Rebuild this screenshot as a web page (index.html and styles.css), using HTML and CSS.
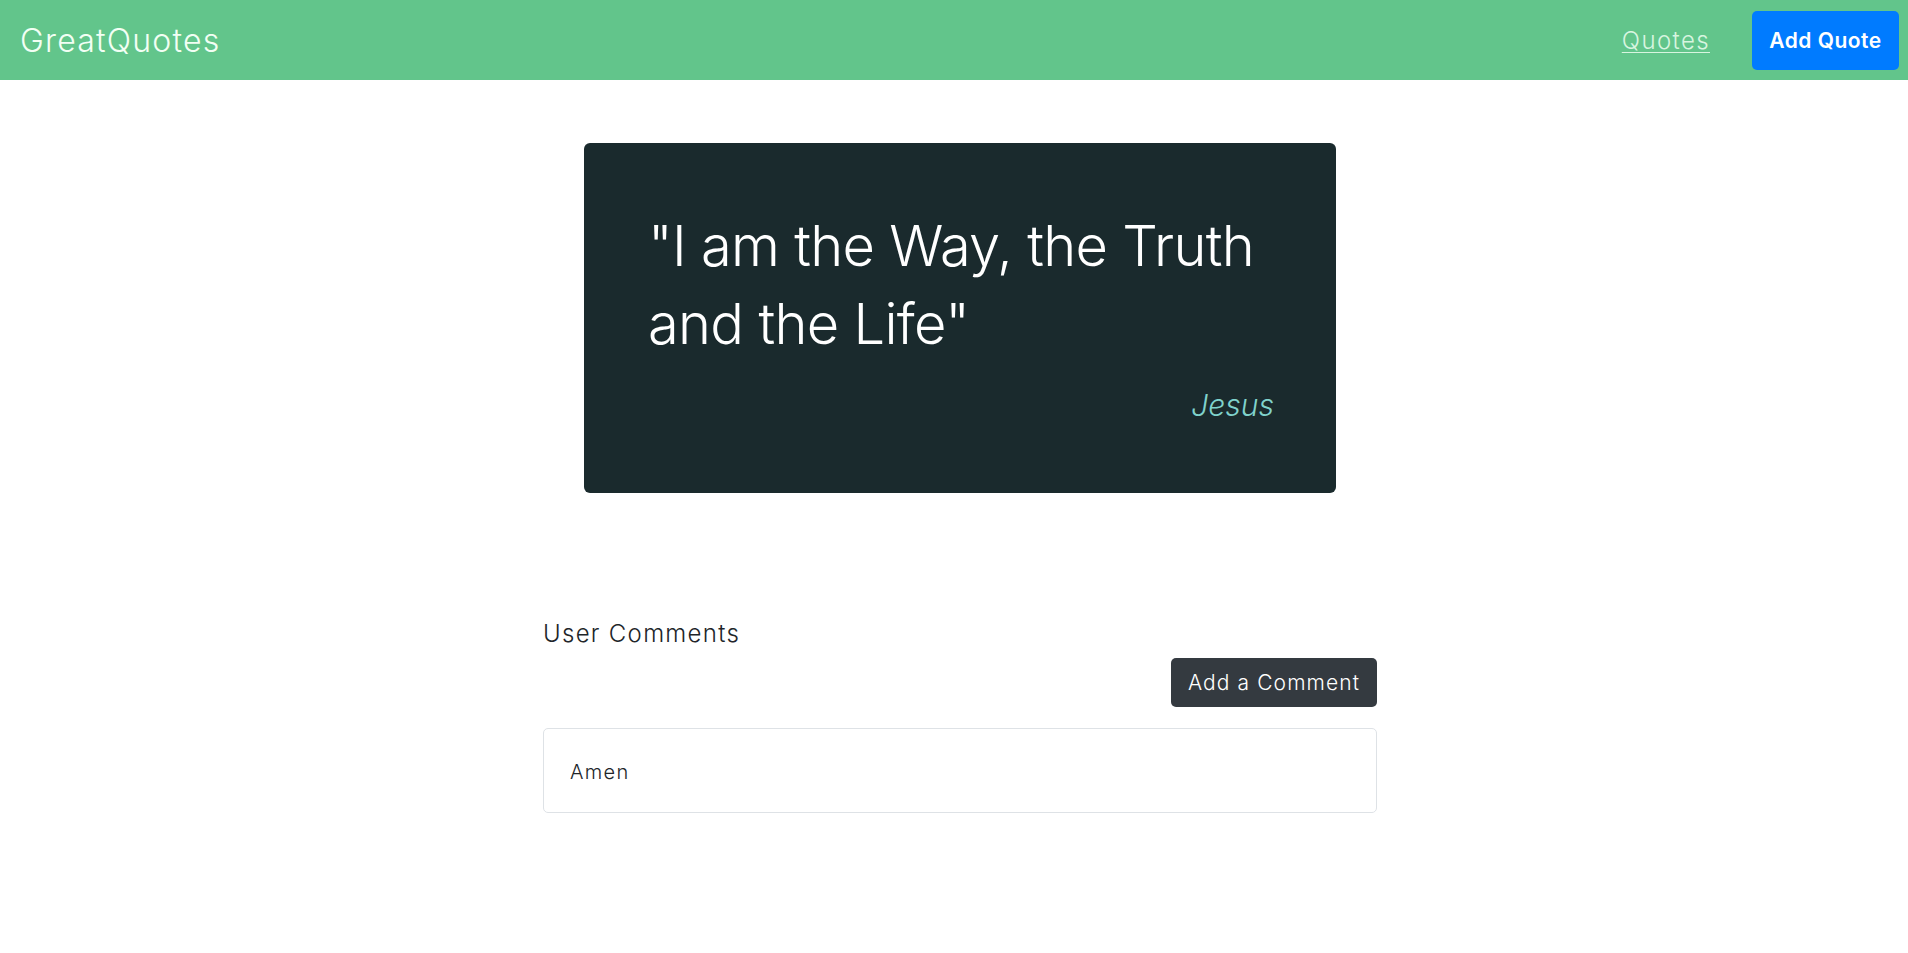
FILE: index.html
```html
<!DOCTYPE html>
<html lang="en">
<head>
<meta charset="utf-8">
<title>GreatQuotes</title>
<link rel="stylesheet" href="styles.css">
</head>
<body>
<header class="header">
  <div class="brand">GreatQuotes</div>
  <nav class="nav">
    <a class="nav-link" href="#">Quotes</a>
    <a class="btn-add-quote" href="#">Add Quote</a>
  </nav>
</header>
<main class="main">
  <div class="content">
    <figure class="quote-card">
      <blockquote class="quote-text">"I am the Way, the Truth and the Life"</blockquote>
      <figcaption class="quote-author">Jesus</figcaption>
    </figure>
    <section class="comments">
      <h2 class="comments-title">User Comments</h2>
      <div class="comments-actions">
        <button class="btn-comment" type="button">Add a Comment</button>
      </div>
      <ul class="comment-list">
        <li class="comment-item">Amen</li>
      </ul>
    </section>
  </div>
</main>
</body>
</html>
```

FILE: styles.css
```css
* { box-sizing: border-box; }

body {
  margin: 0;
  font-family: Inter, "Open Sans", sans-serif;
  color: #212529;
  background: #fff;
}

.header {
  height: 80px;
  background: #62c58b;
  display: flex;
  align-items: center;
  justify-content: space-between;
  padding: 0 9px 0 20px;
}

.brand {
  font-size: 32px;
  font-weight: 300;
  color: #f2fff4;
  letter-spacing: 1.2px;
}

.nav {
  display: flex;
  align-items: center;
}

.nav-link {
  font-size: 24px;
  font-weight: 300;
  color: #d8f5e0;
  letter-spacing: 1.4px;
  text-decoration: underline;
  text-underline-offset: 3px;
  text-decoration-thickness: 1px;
  margin-right: 42px;
}

.btn-add-quote {
  display: flex;
  align-items: center;
  justify-content: center;
  width: 147px;
  height: 59px;
  background: #007bff;
  color: #fff;
  border-radius: 5px;
  font-size: 21px;
  font-weight: 600;
  letter-spacing: 0.5px;
  text-decoration: none;
}

.main {
  padding-left: 12px;
}

.content {
  width: 834px;
  margin: 0 auto;
}

.quote-card {
  width: 752px;
  height: 350px;
  margin: 63px auto 0;
  background: #1a2a2d;
  border-radius: 6px;
  padding: 64px 62px 0 64px;
}

.quote-text {
  margin: 0;
  font-size: 56px;
  font-weight: 300;
  line-height: 78px;
  letter-spacing: -0.7px;
  color: #fff;
}

.quote-author {
  margin-top: 20px;
  text-align: right;
  font-size: 30px;
  font-weight: 300;
  font-style: italic;
  line-height: 45px;
  color: #80d2cc;
}

.comments {
  margin-top: 126px;
}

.comments-title {
  margin: 0;
  font-size: 24px;
  font-weight: 300;
  line-height: 29px;
  letter-spacing: 1.3px;
  color: #212529;
}

.comments-actions {
  display: flex;
  justify-content: flex-end;
  margin-top: 10px;
}

.btn-comment {
  height: 49px;
  width: 206px;
  background: #343a40;
  color: #fff;
  border: none;
  border-radius: 5px;
  font-family: inherit;
  font-size: 21px;
  font-weight: 300;
  letter-spacing: 1.1px;
  padding: 0 10px;
}

.comment-list {
  list-style: none;
  margin: 21px 0 0;
  padding: 0;
}

.comment-item {
  height: 85px;
  border: 1px solid #dee2e6;
  border-radius: 5px;
  display: flex;
  align-items: center;
  padding: 2px 26px 0;
  font-size: 20px;
  font-weight: 300;
  letter-spacing: 1.3px;
  color: #212529;
}
```
